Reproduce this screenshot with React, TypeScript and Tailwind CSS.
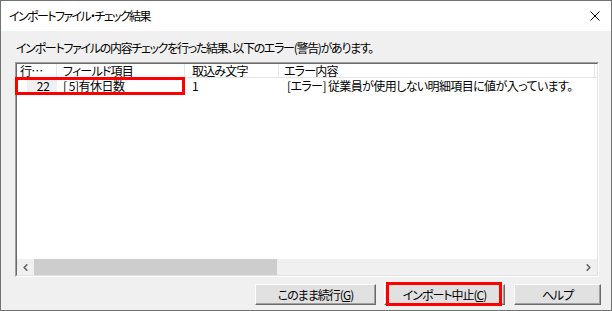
import { ChevronLeft, ChevronRight } from "lucide-react";

const font = "font-['Noto_Sans_CJK_JP','Noto_Sans',sans-serif] [font-feature-settings:'palt']";

const columns = [
	{ label: "行…", width: "w-[40px]", pad: "pl-[3px]" },
	{ label: "フィールド項目", width: "w-[128px]", pad: "pl-[6px]" },
	{ label: "取込み文字", width: "w-[94px]", pad: "pl-[7px]" },
	{ label: "エラー内容", width: "w-[316px]", pad: "pl-[5px]" },
];

const Button = ({ label, width }: { label: React.ReactNode; width: string }) => (
	<div
		className={`${width} flex h-[21px] items-center justify-center border border-t-white border-l-white border-r-[#696969] border-b-[#696969] bg-[#e1e1e1] text-[12px] leading-none tracking-[-1px] text-black shadow-[inset_-1px_-1px_0_#a0a0a0]`}
	>
		{label}
	</div>
);

const App = () => {
	return (
		<div
			className={`${font} flex h-[311px] w-[612px] flex-col border border-[#727272] bg-[#f0f0f0] text-black`}
		>
			{/* title bar */}
			<div className="flex h-[30px] shrink-0 items-center justify-between bg-white pr-[11px] pl-[8px]">
				<span className="text-[12px] leading-none tracking-[-1.6px]">インポートファイル・チェック結果</span>
				<svg width="10" height="10" viewBox="0 0 10 10">
					<path d="M0.5 0.5 L9.5 9.5 M9.5 0.5 L0.5 9.5" stroke="#000" strokeWidth="1" />
				</svg>
			</div>

			<div className="flex flex-1 flex-col px-[14px]">
				<p className="mt-[10px] h-[14px] pl-[1px] text-[12px] leading-[14px] tracking-[-1.3px] whitespace-nowrap">
					インポートファイルの内容チェックを行った結果、以下のエラー(警告)があります。
				</p>

				{/* list view */}
				<div className="mt-[7px] h-[215px] w-[584px] border border-t-[#a0a0a0] border-l-[#a0a0a0] border-r-white border-b-white">
					<div className="flex h-full flex-col border border-t-[#696969] border-l-[#696969] border-r-[#e3e3e3] border-b-[#e3e3e3] bg-white">
						<div className="flex h-[14px] shrink-0 border-b border-[#e5e5e5] text-[12px] leading-[13px] tracking-[-0.8px]">
							{columns.map((col) => (
								<div
									key={col.label}
									className={`${col.width} ${col.pad} shrink-0 border-r border-[#e5e5e5] whitespace-nowrap`}
								>
									{col.label}
								</div>
							))}
						</div>

						<div className="relative flex h-[16px] shrink-0 items-center text-[12px] leading-none">
							<div className="flex w-[40px] shrink-0 justify-end pl-[3px]">
								<span className="flex h-[14px] w-[30px] items-center justify-end bg-[#f0f0f0] pr-[7px]">
									22
								</span>
							</div>
							<div className="w-[128px] shrink-0 pl-[6px] tracking-[-0.5px]">[ 5]有休日数</div>
							<div className="w-[94px] shrink-0 pl-[7px]">1</div>
							<div className="w-[316px] shrink-0 pl-[8px] tracking-[-0.6px] whitespace-nowrap">
								[エラー] 従業員が使用しない明細項目に値が入っています。
							</div>
							<div className="pointer-events-none absolute top-[-1px] left-[-2px] h-[18px] w-[170px] border-[3px] border-[#ff0000]" />
						</div>

						<div className="flex-1" />

						{/* horizontal scrollbar */}
						<div className="flex h-[16px] shrink-0 items-center bg-[#f0f0f0]">
							<div className="flex h-full w-[17px] items-center justify-center text-[#606060]">
								<ChevronLeft size={11} strokeWidth={3.5} />
							</div>
							<div className="flex h-full flex-1 items-center">
								<div className="h-full w-[243px] bg-[#cdcdcd]" />
							</div>
							<div className="flex h-full w-[17px] items-center justify-center text-[#606060]">
								<ChevronRight size={11} strokeWidth={3.5} />
							</div>
						</div>
					</div>
				</div>

				{/* buttons */}
				<div className="mt-[7px] mr-[-4px] flex justify-end gap-[8px]">
					<Button
						width="w-[121px]"
						label={
							<>
								このまま続行(<span className="underline">G</span>)
							</>
						}
					/>
					<div className="relative">
						<Button
							width="w-[121px]"
							label={
								<>
									インポート中止(<span className="underline">C</span>)
								</>
							}
						/>
						<div className="pointer-events-none absolute top-[-2px] left-[2px] h-[24px] w-[116px] border-[3px] border-[#ff0000]" />
					</div>
					<div className="ml-[1px]">
						<Button width="w-[87px]" label="ヘルプ" />
					</div>
				</div>
			</div>
		</div>
	);
};

export default App;
